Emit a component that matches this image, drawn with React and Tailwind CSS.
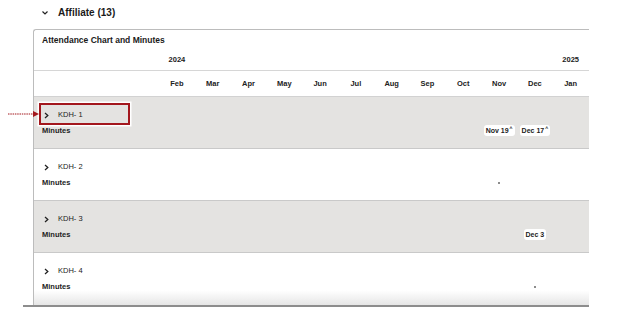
import React from 'react'

const months = ['Feb', 'Mar', 'Apr', 'May', 'Jun', 'Jul', 'Aug', 'Sep', 'Oct', 'Nov', 'Dec', 'Jan']

const rows = [
	{name: 'KDH- 1', gray: true, marks: {9: {chip: 'Nov 19', sup: true}, 10: {chip: 'Dec 17', sup: true}}},
	{name: 'KDH- 2', gray: false, marks: {9: {dot: true}}},
	{name: 'KDH- 3', gray: true, marks: {10: {chip: 'Dec 3'}}},
	{name: 'KDH- 4', gray: false, last: true, marks: {10: {dot: true}}},
]

const gridCols = 'grid grid-cols-[125px_repeat(12,35.8px)]'

function Chip({label, sup}) {
	return (
		<span className="inline-flex items-start rounded-[3px] bg-white px-[2px] h-[11px] text-[7px] font-bold leading-[11px] text-[#222] whitespace-nowrap">
			{label}
			{sup && <span className="ml-[1px] text-[5px] leading-[7px]">^</span>}
		</span>
	)
}

function Row({row}) {
	const bg = row.gray
		? 'bg-[#e4e3e1]'
		: row.last
			? 'bg-linear-to-b from-white from-[72%] to-[#e6e6e6]'
			: 'bg-white'
	return (
		<div className={`flex flex-col h-[52px] pt-[13px] ${bg} ${row.last ? '' : 'border-b border-[#c9c9c9]'}`}>
			<div className="flex items-center h-[10px] pl-[10px] gap-[9px]">
				<svg width="5" height="7" viewBox="0 0 5 7" className="shrink-0">
					<polyline points="1,1 3.8,3.5 1,6" fill="none" stroke="#222" strokeWidth="1.3" />
				</svg>
				<span className="text-[7.5px] text-[#222] leading-[10px]">{row.name}</span>
			</div>
			<div className={`${gridCols} h-[11px] mt-[5px] items-center`}>
				<span className="pl-[8px] text-[7.5px] font-bold leading-[11px] text-[#222]">Minutes</span>
				{months.map((m, i) => {
					const mark = row.marks[i]
					return (
						<div key={m} className="flex justify-center items-center">
							{mark && mark.chip && <Chip label={mark.chip} sup={mark.sup} />}
							{mark && mark.dot && <span className="w-[2px] h-[2px] bg-[#8c8c8c]" />}
						</div>
					)
				})}
			</div>
		</div>
	)
}

export default function App() {
	return (
		<div className="relative w-[628px] h-[332px] bg-white overflow-hidden font-['Liberation_Sans',Arial,sans-serif] text-[#1a1a1a]">
			<div className="flex items-center h-[24px] pt-[1px] pl-[42px] gap-[10px]">
				<svg width="6" height="4" viewBox="0 0 6 4">
					<polyline points="0.5,0.5 3,3 5.5,0.5" fill="none" stroke="#222" strokeWidth="1.2" />
				</svg>
				<span className="text-[10px] font-bold">Affiliate (13)</span>
			</div>

			<div className="ml-[23px] w-[566px] pt-[5px]">
				<div className="ml-[10px] border-l border-t border-[#bcbcbc] rounded-tl-[3px]">
					<div className="h-[20px] pl-[8px] pb-[1px] flex items-center">
						<span className="text-[8.5px] font-bold leading-[12px]">Attendance Chart and Minutes</span>
					</div>
					<div className={`${gridCols} h-[21px] items-center border-b border-[#d6d6d6]`}>
						<span />
						<span className="text-center text-[7.5px] font-bold">2024</span>
						{months.slice(1, 11).map(m => <span key={m} />)}
						<span className="text-center text-[7.5px] font-bold">2025</span>
					</div>
					<div className={`${gridCols} h-[25px] items-center`}>
						<span />
						{months.map(m => (
							<span key={m} className="text-center text-[7.5px] font-bold text-[#222]">{m}</span>
						))}
					</div>
					<div className="border-t border-[#d2d2d2]">
						{rows.map(r => <Row key={r.name} row={r} />)}
					</div>
				</div>
				<div className="h-[2px] bg-[#8d8d8d]" />
			</div>

			{/* annotation */}
			<div className="absolute left-[39px] top-[103px] w-[91px] h-[22px] border-2 border-[#a3171d] shadow-[0_0_0_1.5px_#ffffff]" />
			<svg className="absolute left-[8px] top-[110px]" width="32" height="8" viewBox="0 0 32 8">
				<line x1="0" y1="4" x2="26" y2="4" stroke="#a3171d" strokeWidth="1" strokeDasharray="1.5 0.8" />
				<polygon points="25,1 31,4 25,7" fill="#a3171d" />
			</svg>
		</div>
	)
}
